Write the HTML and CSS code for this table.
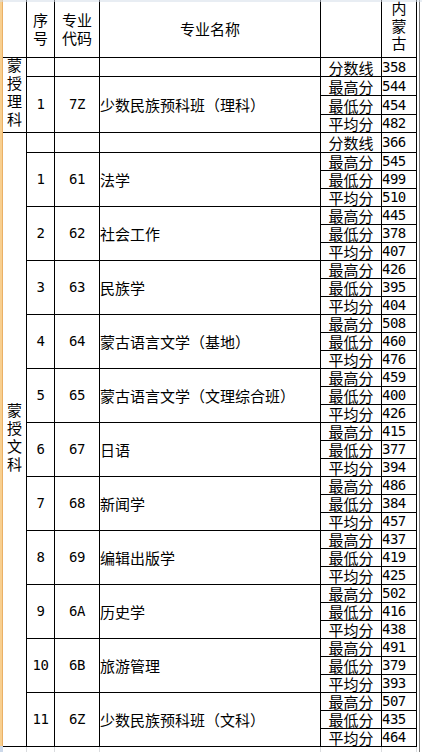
FILE: index.html
```html
<!DOCTYPE html>
<html lang="zh-CN">
<head>
<meta charset="utf-8">
<title>蒙授分数线</title>
<link rel="stylesheet" href="styles.css">
</head>
<body>
<div class="sheet">
  <div class="rowhead"><div class="rowhead-fill"></div><div class="rowhead-end"></div></div>
  <div class="main">
    <table class="grid">
      <colgroup>
        <col class="c-cat"><col class="c-no"><col class="c-code"><col class="c-name"><col class="c-kind"><col class="c-val">
      </colgroup>
      <tr class="r-head">
        <td class="cat"></td>
        <td class="hd"><div class="hl">序</div><div class="hl">号</div></td>
        <td class="hd"><div class="hl">专业</div><div class="hl">代码</div></td>
        <td class="hd">专业名称</td>
        <td></td>
        <td class="hd"><span class="vtext vtext-tight">内蒙古</span></td>
      </tr>
      <tr class="r-line1">
        <td class="cat" rowspan="4"><span class="vtext">蒙授理科</span></td>
        <td></td><td></td><td></td>
        <td class="kind">分数线</td><td class="val">358</td>
      </tr>
      <tr class="r-a"><td class="no" rowspan="3">1</td><td class="code" rowspan="3">7Z</td><td class="name" rowspan="3">少数民族预科班（理科）</td><td class="kind">最高分</td><td class="val">544</td></tr>
      <tr class="r-b"><td class="kind">最低分</td><td class="val">454</td></tr>
      <tr class="r-a"><td class="kind">平均分</td><td class="val">482</td></tr>
      <tr class="r-line2">
        <td class="cat" rowspan="34"><span class="vtext">蒙授文科</span></td>
        <td></td><td></td><td></td>
        <td class="kind">分数线</td><td class="val">366</td>
      </tr>
      <tr class="r-sub"><td class="no" rowspan="3">1</td><td class="code" rowspan="3">61</td><td class="name" rowspan="3">法学</td><td class="kind">最高分</td><td class="val">545</td></tr>
      <tr class="r-sub"><td class="kind">最低分</td><td class="val">499</td></tr>
      <tr class="r-sub"><td class="kind">平均分</td><td class="val">510</td></tr>
      <tr class="r-sub"><td class="no" rowspan="3">2</td><td class="code" rowspan="3">62</td><td class="name" rowspan="3">社会工作</td><td class="kind">最高分</td><td class="val">445</td></tr>
      <tr class="r-sub"><td class="kind">最低分</td><td class="val">378</td></tr>
      <tr class="r-sub"><td class="kind">平均分</td><td class="val">407</td></tr>
      <tr class="r-sub"><td class="no" rowspan="3">3</td><td class="code" rowspan="3">63</td><td class="name" rowspan="3">民族学</td><td class="kind">最高分</td><td class="val">426</td></tr>
      <tr class="r-sub"><td class="kind">最低分</td><td class="val">395</td></tr>
      <tr class="r-sub"><td class="kind">平均分</td><td class="val">404</td></tr>
      <tr class="r-sub"><td class="no" rowspan="3">4</td><td class="code" rowspan="3">64</td><td class="name" rowspan="3">蒙古语言文学（基地）</td><td class="kind">最高分</td><td class="val">508</td></tr>
      <tr class="r-sub"><td class="kind">最低分</td><td class="val">460</td></tr>
      <tr class="r-sub"><td class="kind">平均分</td><td class="val">476</td></tr>
      <tr class="r-sub"><td class="no" rowspan="3">5</td><td class="code" rowspan="3">65</td><td class="name" rowspan="3">蒙古语言文学（文理综合班）</td><td class="kind">最高分</td><td class="val">459</td></tr>
      <tr class="r-sub"><td class="kind">最低分</td><td class="val">400</td></tr>
      <tr class="r-sub"><td class="kind">平均分</td><td class="val">426</td></tr>
      <tr class="r-sub"><td class="no" rowspan="3">6</td><td class="code" rowspan="3">67</td><td class="name" rowspan="3">日语</td><td class="kind">最高分</td><td class="val">415</td></tr>
      <tr class="r-sub"><td class="kind">最低分</td><td class="val">377</td></tr>
      <tr class="r-sub"><td class="kind">平均分</td><td class="val">394</td></tr>
      <tr class="r-sub"><td class="no" rowspan="3">7</td><td class="code" rowspan="3">68</td><td class="name" rowspan="3">新闻学</td><td class="kind">最高分</td><td class="val">486</td></tr>
      <tr class="r-sub"><td class="kind">最低分</td><td class="val">384</td></tr>
      <tr class="r-sub"><td class="kind">平均分</td><td class="val">457</td></tr>
      <tr class="r-sub"><td class="no" rowspan="3">8</td><td class="code" rowspan="3">69</td><td class="name" rowspan="3">编辑出版学</td><td class="kind">最高分</td><td class="val">437</td></tr>
      <tr class="r-sub"><td class="kind">最低分</td><td class="val">419</td></tr>
      <tr class="r-sub"><td class="kind">平均分</td><td class="val">425</td></tr>
      <tr class="r-sub"><td class="no" rowspan="3">9</td><td class="code" rowspan="3">6A</td><td class="name" rowspan="3">历史学</td><td class="kind">最高分</td><td class="val">502</td></tr>
      <tr class="r-sub"><td class="kind">最低分</td><td class="val">416</td></tr>
      <tr class="r-sub"><td class="kind">平均分</td><td class="val">438</td></tr>
      <tr class="r-sub"><td class="no" rowspan="3">10</td><td class="code" rowspan="3">6B</td><td class="name" rowspan="3">旅游管理</td><td class="kind">最高分</td><td class="val">491</td></tr>
      <tr class="r-sub"><td class="kind">最低分</td><td class="val">379</td></tr>
      <tr class="r-sub"><td class="kind">平均分</td><td class="val">393</td></tr>
      <tr class="r-sub"><td class="no" rowspan="3">11</td><td class="code" rowspan="3">6Z</td><td class="name" rowspan="3">少数民族预科班（文科）</td><td class="kind">最高分</td><td class="val">507</td></tr>
      <tr class="r-sub"><td class="kind">最低分</td><td class="val">435</td></tr>
      <tr class="r-sub"><td class="kind">平均分</td><td class="val">464</td></tr>
    </table>
    <div class="below">
      <div class="g g-cat"></div><div class="g g-no"></div><div class="g g-code"></div><div class="g g-name"></div><div class="g g-kind"></div><div class="g g-val"></div>
    </div>
  </div>
  <div class="edge-gap"></div>
  <div class="edge-line"></div>
  <div class="edge-rest"></div>
</div>
</body>
</html>
```

FILE: styles.css
```css
html, body {
  margin: 0;
  padding: 0;
  background: #ffffff;
}

.sheet {
  position: relative;
  width: 422px;
  height: 752px;
  display: flex;
  overflow: hidden;
  background: #ffffff;
  color: #000000;
  font-family: "Noto Sans CJK SC", "Noto Sans CJK JP", sans-serif;
  font-size: 15px;
}

.sheet::before {
  content: "";
  position: absolute;
  left: 0;
  top: 0;
  width: 422px;
  height: 2px;
  background: rgba(214, 222, 234, 0.55);
}

.rowhead {
  flex: none;
  width: 3px;
  display: flex;
  flex-direction: column;
}

.rowhead-fill {
  height: 746px;
  background: #f8cf8f;
  box-shadow: inset -1px 0 0 #eab066;
}

.rowhead-end {
  flex: 1;
  background: #cdd9ea;
}

.main {
  flex: none;
  width: 414px;
  display: flex;
  flex-direction: column;
}

.grid {
  border-collapse: separate;
  border-spacing: 0;
  table-layout: fixed;
  width: 414px;
}

.c-cat { width: 24px; }
.c-no { width: 28px; }
.c-code { width: 45px; }
.c-name { width: 221px; }
.c-kind { width: 61px; }
.c-val { width: 35px; }

.grid td {
  border-right: 1px solid #000;
  border-bottom: 1px solid #000;
  padding: 0;
  vertical-align: middle;
  white-space: nowrap;
  line-height: 17px;
}

.r-head { height: 58px; }
.r-line1 { height: 19px; }
.r-a { height: 18px; }
.r-b { height: 19px; }
.r-line2 { height: 20px; }
.r-sub { height: 18px; }

.hd {
  text-align: center;
  line-height: 18px;
  padding-top: 2px;
}

.hl {
  height: 18px;
  line-height: 18px;
}

.cat {
  text-align: center;
}

.vtext {
  display: inline-block;
  writing-mode: vertical-rl;
  text-orientation: upright;
  letter-spacing: 3px;
  line-height: 15px;
}

.vtext-tight {
  letter-spacing: 2.5px;
}

.no, .code {
  text-align: center;
  font-family: "DejaVu Sans Mono", "Liberation Mono", monospace;
  font-size: 14px;
  letter-spacing: -0.5px;
}

.name {
  text-align: left;
  padding-left: 2px;
}

.kind {
  text-align: center;
  line-height: 17px;
}

.val {
  text-align: left;
  padding-left: 2px;
  font-family: "DejaVu Sans Mono", "Liberation Mono", monospace;
  font-size: 14px;
  letter-spacing: -0.5px;
}

.below {
  flex: 1;
  display: flex;
}

.g {
  flex: none;
  box-sizing: border-box;
  border-right: 1px solid #dadcdf;
}

.g-cat { width: 24px; }
.g-no { width: 28px; }
.g-code { width: 45px; }
.g-name { width: 221px; }
.g-kind { width: 61px; }
.g-val { width: 35px; }

.edge-gap {
  flex: none;
  width: 2px;
}

.edge-line {
  flex: none;
  width: 1px;
  background: #7c7c7c;
}

.edge-rest {
  flex: 1;
}
```
